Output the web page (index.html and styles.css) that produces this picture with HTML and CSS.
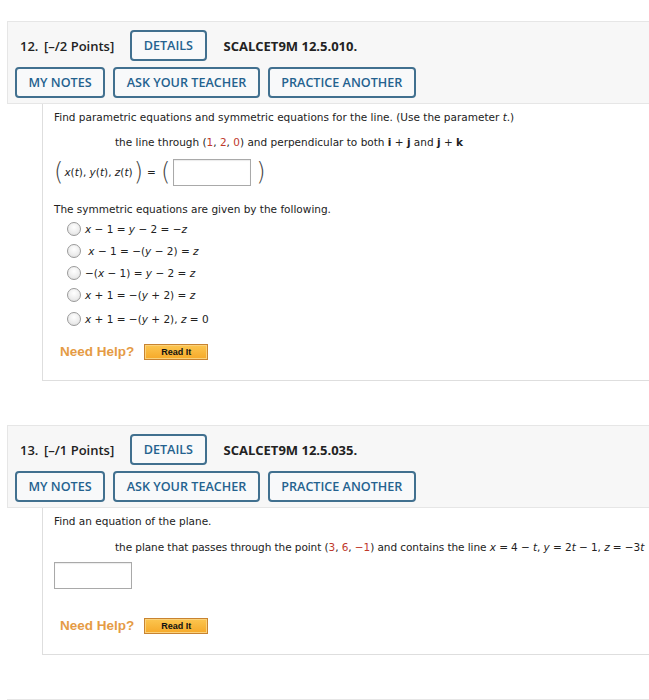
FILE: index.html
```html
<!DOCTYPE html>
<html>
<head>
<meta charset="utf-8">
<link rel="stylesheet" href="styles.css">
</head>
<body>
<div class="page">
  <section class="question">
    <div class="qhead">
      <div class="row1">
        <span class="qnum">12.</span>
        <span class="pts">[–/2 Points]</span>
        <span class="btn">DETAILS</span>
        <span class="code">SCALCET9M 12.5.010.</span>
      </div>
      <div class="row2">
        <span class="btn">MY NOTES</span>
        <span class="btn">ASK YOUR TEACHER</span>
        <span class="btn">PRACTICE ANOTHER</span>
      </div>
    </div>
    <div class="qbody b1">
      <p class="intro">Find parametric equations and symmetric equations for the line. (Use the parameter <i>t</i>.)</p>
      <p class="indent">the line through (<span class="red">1</span>, <span class="red">2</span>, <span class="red">0</span>) and perpendicular to both <b>i</b> + <b>j</b> and <b>j</b> + <b>k</b></p>
      <div class="eqrow">
        <span class="bigp">(</span><span class="fn"><i>x</i>(<i>t</i>), <i>y</i>(<i>t</i>), <i>z</i>(<i>t</i>)</span><span class="bigp">)</span>
        <span class="eq">=</span>
        <span class="bigp">(</span><span class="box wide"></span><span class="bigp">)</span>
      </div>
      <p class="symm">The symmetric equations are given by the following.</p>
      <ul class="radios">
        <li><span class="radio"></span><span class="opt"><i>x</i> − 1 = <i>y</i> − 2 = −<i>z</i></span></li>
        <li><span class="radio"></span><span class="opt">&nbsp;<i>x</i> − 1 = −(<i>y</i> − 2) = <i>z</i></span></li>
        <li><span class="radio"></span><span class="opt">−(<i>x</i> − 1) = <i>y</i> − 2 = <i>z</i></span></li>
        <li><span class="radio"></span><span class="opt"><i>x</i> + 1 = −(<i>y</i> + 2) = <i>z</i></span></li>
        <li><span class="radio"></span><span class="opt"><i>x</i> + 1 = −(<i>y</i> + 2), <i>z</i> = 0</span></li>
      </ul>
      <div class="help"><span class="need">Need Help?</span><span class="readit">Read It</span></div>
    </div>
  </section>

  <section class="question">
    <div class="qhead">
      <div class="row1">
        <span class="qnum">13.</span>
        <span class="pts">[–/1 Points]</span>
        <span class="btn">DETAILS</span>
        <span class="code">SCALCET9M 12.5.035.</span>
      </div>
      <div class="row2">
        <span class="btn">MY NOTES</span>
        <span class="btn">ASK YOUR TEACHER</span>
        <span class="btn">PRACTICE ANOTHER</span>
      </div>
    </div>
    <div class="qbody b2">
      <p class="intro">Find an equation of the plane.</p>
      <p class="indent nowrap tight">the plane that passes through the point (<span class="red">3</span>, <span class="red">6</span>, <span class="red">−1</span>) and contains the line <i>x</i> = 4 − <i>t</i>, <i>y</i> = 2<i>t</i> − 1, <i>z</i> = −3<i>t</i></p>
      <div class="box plane"></div>
      <div class="help"><span class="need">Need Help?</span><span class="readit">Read It</span></div>
    </div>
  </section>

  <section class="question">
    <div class="qhead stub"></div>
  </section>
</div>
</body>
</html>
```

FILE: styles.css
```css
html, body {
  margin: 0;
  padding: 0;
  background: #fff;
  overflow: hidden;
}
.page {
  width: 760px;
  padding: 21px 0 0 7px;
}
.question {
  margin-bottom: 44px;
}
.qhead {
  background: #f7f7f7;
  border: 1px solid #e6e6e6;
  border-right: none;
  padding: 8px 0 5px 7px;
  font-family: "Open Sans", sans-serif;
  font-weight: 600;
  font-size: 13px;
  color: #222;
}
.qhead.stub {
  height: 60px;
  padding: 0;
}
.row1, .row2 {
  display: flex;
  align-items: center;
}
.row2 {
  margin-top: 6px;
  gap: 8px;
}
.qnum {
  margin-left: 5px;
  width: 24px;
}
.pts {
  margin-right: 16px;
}
.code {
  margin-left: 17px;
  font-weight: 700;
}
.btn {
  display: inline-flex;
  align-items: center;
  justify-content: center;
  box-sizing: border-box;
  height: 31px;
  padding: 0 11.5px;
  border: 2px solid #41708f;
  border-radius: 4px;
  background: #f8f9fa;
  color: #24628f;
  font-weight: 600;
  font-size: 12.6px;
}
.qbody {
  margin-left: 35px;
  border-left: 1px solid #dedede;
  border-bottom: 1px solid #dedede;
  padding: 5px 0 0 11px;
  font-family: "DejaVu Sans", Verdana, sans-serif;
  font-size: 10.5px;
  color: #222;
  line-height: 16px;
}
.qbody p {
  margin: 0;
}
.indent {
  margin-left: 61px !important;
  margin-top: 9px !important;
}
.nowrap {
  white-space: nowrap;
}
.tight {
  letter-spacing: -0.07px;
}
.red {
  color: #c0392b;
}
.eqrow {
  display: flex;
  align-items: center;
  margin-top: 6px;
  height: 32px;
}
.bigp {
  font-family: "DejaVu Sans", sans-serif;
  font-weight: 200;
  font-size: 24px;
  line-height: 28px;
  color: #444;
}
.fn {
  font-size: 10.5px;
  margin: 0 1px;
}
.eq {
  margin: 0 5px 0 4px;
}
.box {
  display: inline-block;
  box-sizing: border-box;
  background: #fff;
  border: 1px solid #a9a9a9;
  box-shadow: inset 0 1px 1px rgba(0,0,0,0.08);
}
.box.wide {
  width: 78px;
  height: 27px;
  margin: 0 5px 0 3px;
}
.symm {
  margin-top: 13px !important;
}
.radios {
  list-style: none;
  margin: 1px 0 0 13px;
  padding: 0;
}
.radios li {
  display: flex;
  align-items: center;
  height: 22px;
}
.radios li:last-child {
  margin-top: 2px;
}
.radio {
  display: inline-block;
  box-sizing: border-box;
  width: 14px;
  height: 14px;
  border-radius: 50%;
  border: 1px solid #9a9a9a;
  background: radial-gradient(circle at 50% 35%, #ffffff 0%, #ececec 60%, #d6d6d6 100%);
  margin-right: 4px;
}
.help {
  display: flex;
  align-items: center;
  margin: 12px 0 0 6px;
  height: 20px;
  padding-bottom: 18px;
}
.need {
  font-family: "Liberation Sans", Arial, sans-serif;
  font-weight: 700;
  font-size: 13.5px;
  color: #e59b45;
  margin-right: 10px;
}
.readit {
  display: inline-flex;
  align-items: center;
  justify-content: center;
  box-sizing: border-box;
  width: 64px;
  height: 16px;
  background: linear-gradient(#fcc650, #f6a929);
  border: 1px solid #c88330;
  box-shadow: inset 0 0 0 1px #fbd27a;
  font-family: "Liberation Sans", Arial, sans-serif;
  font-weight: 700;
  font-size: 9px;
  color: #111;
}
.box.plane {
  display: block;
  width: 78px;
  height: 27px;
  margin: 7px 0 0 0;
}
.b2 .help {
  margin-top: 27px;
}
.b2 .indent {
  margin-top: 10px !important;
}
```
